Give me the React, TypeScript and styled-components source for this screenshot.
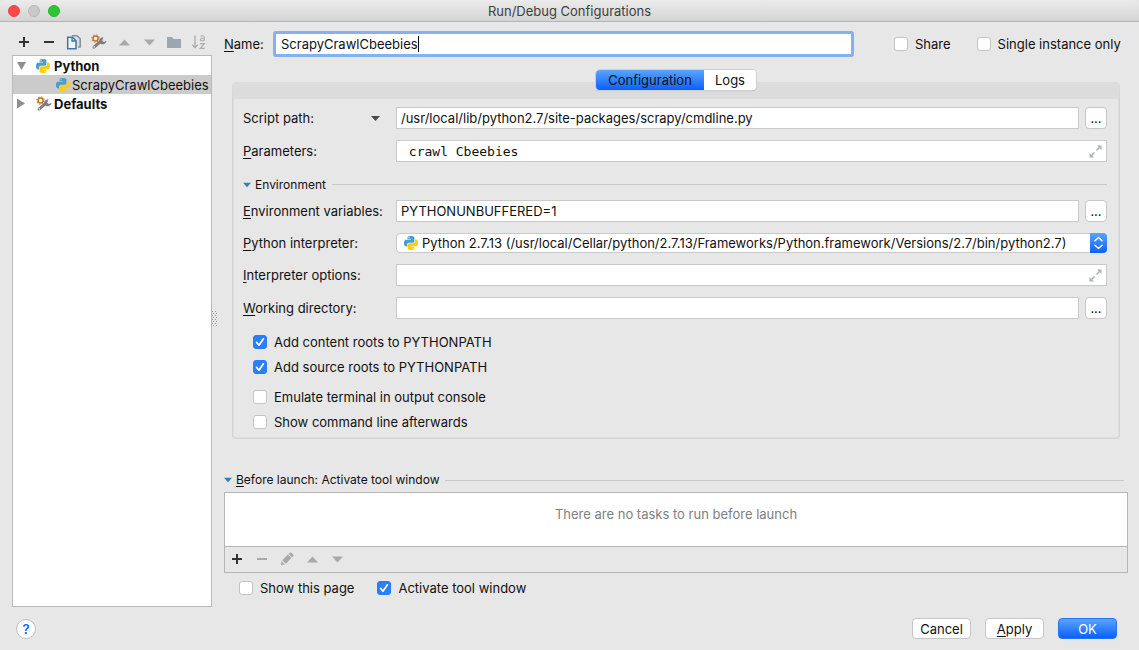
import React, { ReactNode, useState } from "react";
import styled, { createGlobalStyle, css } from "styled-components";

const GlobalStyle = createGlobalStyle`
  *, *::before, *::after { box-sizing: border-box; }
  body {
    margin: 0;
    background: #e7e7e7;
    color: #111;
    font: 13px/16px Inter, "Liberation Sans", sans-serif;
  }
  button, input, select { font: inherit; color: inherit; margin: 0; }
  ul { list-style: none; margin: 0; padding: 0; }
`;

/* ---------- window frame ---------- */

const Window = styled.div`
  display: flex;
  flex-direction: column;
  min-height: 100vh;
`;

const TitleBar = styled.header`
  display: grid;
  grid-template-columns: 76px 1fr 84px;
  align-items: center;
  height: 22px;
  padding-left: 8px;
  background: linear-gradient(#ebebeb, #d3d3d3);
  border-bottom: 1px solid #b4b4b4;
  border-top-left-radius: 5px;
  border-top-right-radius: 5px;
`;

const Lights = styled.div`
  display: flex;
  gap: 8px;
`;

const Light = styled.button<{ $fill: string; $edge: string }>`
  width: 12px;
  height: 12px;
  padding: 0;
  border: 1px solid ${(p) => p.$edge};
  border-radius: 50%;
  background: ${(p) => p.$fill};
`;

const Title = styled.h1`
  margin: 0;
  font-size: 13px;
  font-weight: 400;
  text-align: center;
  color: #404040;
`;

const Main = styled.main`
  display: flex;
  flex: 1;
`;

const Footer = styled.footer`
  display: flex;
  align-items: center;
  gap: 14px;
  padding: 11px 22px 11px 16px;
`;

/* ---------- left side ---------- */

const Sidebar = styled.aside`
  display: flex;
  flex-direction: column;
  flex: none;
  width: 212px;
  padding-left: 12px;
`;

const ToolRow = styled.div<{ $height: number }>`
  display: flex;
  align-items: flex-start;
  height: ${(p) => p.$height}px;
`;

const ToolButton = styled.button`
  display: grid;
  place-items: center;
  width: 25px;
  height: 24px;
  padding: 0 1px 0 0;
  border: 0;
  background: none;
`;

const SidebarTools = styled(ToolRow)`
  padding-top: 8px;
`;

const Tree = styled.ul`
  flex: 1;
  border: 1px solid #b9b9b9;
  background: #fff;
`;

const TreeRow = styled.li<{ $child?: boolean; $selected?: boolean }>`
  display: flex;
  align-items: center;
  height: 19px;
  padding-left: ${(p) => (p.$child ? 43 : 3)}px;
  font-weight: ${(p) => (p.$child ? 400 : 700)};
  background: ${(p) => (p.$selected ? "#cbcbcb" : "transparent")};
  white-space: nowrap;
`;

const TreeArrow = styled.span`
  width: 20px;
  height: 10px;
  display: flex;
  align-items: center;
`;

const TreeIcon = styled.span<{ $gap: number }>`
  display: flex;
  margin-right: ${(p) => p.$gap}px;
`;

const Splitter = styled.div`
  display: flex;
  align-items: center;
  flex: none;
  width: 12px;
  padding-top: 8px;
`;

/* ---------- right side ---------- */

const Details = styled.section`
  flex: 1;
  min-width: 0;
  padding: 9px 11px 11px 0;
`;

const NameRow = styled.div`
  display: flex;
  align-items: center;
`;

const NameLabel = styled.label`
  flex: none;
  width: 49px;
`;

const NameField = styled.div`
  display: flex;
  align-items: center;
  flex: 1;
  height: 26px;
  margin-right: 40px;
  padding-left: 5px;
  border: 3px solid #85b1f0;
  border-radius: 3px;
  background: #fff;
`;

const NameInput = styled.input`
  field-sizing: content;
  height: 20px;
  padding: 0;
  border: 0;
  outline: 0;
  background: none;
`;

const Caret = styled.span`
  width: 1px;
  height: 16px;
  background: #000;
`;

const NameChecks = styled.div`
  display: flex;
  gap: 26px;
  flex: none;
  width: 234px;
`;

const CheckLabel = styled.label`
  display: flex;
  align-items: center;
  gap: 7px;
  white-space: nowrap;
`;

const tick =
  "url(\"data:image/svg+xml,%3Csvg xmlns='http://www.w3.org/2000/svg' viewBox='0 0 14 14'%3E%3Cpath d='M3.6 7.4 6 10.2 10.4 3.8' fill='none' stroke='white' stroke-width='1.7' stroke-linecap='round' stroke-linejoin='round'/%3E%3C/svg%3E\")";

const CheckInput = styled.input`
  appearance: none;
  flex: none;
  width: 14px;
  height: 14px;
  border: 1px solid #c4c4c4;
  border-radius: 3px;
  background: #fff;
  &:checked {
    border-color: #2a7bf6;
    background: #2a7ffb ${tick} center / 14px 14px no-repeat;
  }
`;

const Tabs = styled.div`
  position: relative;
  display: flex;
  width: fit-content;
  margin: 13px auto -8px;
  border-radius: 4px;
  background: #fff;
  box-shadow: 0 0 0 1px #cfcfcf, 0 1px 1px #a8a8a8;
`;

const Tab = styled.button<{ $active?: boolean }>`
  height: 20px;
  padding: 0;
  width: ${(p) => (p.$active ? 108 : 52)}px;
  border: 0;
  border-radius: ${(p) => (p.$active ? "4px 0 0 4px" : "0 4px 4px 0")};
  background: ${(p) => (p.$active ? "linear-gradient(#5ba4fb, #0a60ff)" : "#fff")};
`;

const Panel = styled.div`
  margin: 0 8px;
  border: 1px solid #d3d3d3;
  border-top-width: 17px;
  border-top-color: #dcdcdc;
  border-radius: 4px;
  padding: 8px 12px 3px 10px;
  box-shadow: inset 1px 0 #dedede, inset -1px 0 #dedede, inset 0 -1px #dedede;
`;

const FormRow = styled.div`
  display: flex;
  align-items: center;
  margin-bottom: 11px;
`;

const FormLabel = styled.label`
  flex: none;
  width: 153px;
`;

const PathLabel = styled.div`
  display: flex;
  align-items: center;
  justify-content: space-between;
  flex: none;
  width: 153px;
  padding-right: 13px;
`;

const Mnemonic = styled.span`
  text-decoration: underline;
  text-underline-offset: 2px;
  text-decoration-thickness: 1px;
`;

const fieldBox = css`
  border: 1px solid #c9c9c9;
  background: #fff;
  height: 22px;
`;

const TextInput = styled.input<{ $mono?: boolean }>`
  ${fieldBox}
  flex: 1;
  min-width: 0;
  width: 100%;
  padding: 0 4px;
  outline: 0;
  ${(p) => p.$mono && css`font-family: "DejaVu Sans Mono", monospace;`}
`;

const ExpandField = styled.div`
  ${fieldBox}
  display: flex;
  align-items: center;
  flex: 1;
  padding-right: 3px;
  & > input {
    height: 20px;
    border: 0;
    background: none;
  }
`;

const BareButton = styled.button`
  display: grid;
  place-items: center;
  width: 15px;
  height: 18px;
  padding: 0;
  border: 0;
  background: none;
`;

const BrowseButton = styled.button`
  flex: none;
  width: 22px;
  height: 22px;
  margin-left: 6px;
  padding: 0;
  border: 1px solid #c6c6c6;
  border-radius: 4px;
  background: #fff;
  line-height: 20px;
`;

const SelectBox = styled.div`
  position: relative;
  flex: 1;
  display: flex;
  height: 20px;
`;

const Select = styled.select`
  appearance: none;
  flex: 1;
  min-width: 0;
  height: 20px;
  padding: 0 18px 0 25px;
  border: 1px solid #c9c9c9;
  border-radius: 4px;
  background: #fff;
  outline: 0;
`;

const SelectIcon = styled.span`
  position: absolute;
  left: 8px;
  top: 3px;
  display: flex;
  pointer-events: none;
`;

const Stepper = styled.span`
  position: absolute;
  right: 0;
  top: 0;
  display: grid;
  place-items: center;
  width: 17px;
  height: 20px;
  border-radius: 0 4px 4px 0;
  background: linear-gradient(#5ba4fb, #0a60ff);
  pointer-events: none;
`;

const SectionHead = styled.div<{ $large?: boolean }>`
  display: flex;
  align-items: center;
  font-size: 12px;
  height: ${(p) => (p.$large ? 16 : 23)}px;
  margin: ${(p) => (p.$large ? "33px 4px 4px 0" : "0 0 4px")};
  &::after {
    content: "";
    flex: 1;
    height: 1px;
    margin-left: 6px;
    background: #c8c8c8;
  }
`;

const SectionToggle = styled.button`
  display: flex;
  align-items: center;
  gap: 4px;
  padding: 0;
  border: 0;
  background: none;
`;

const CheckGroup = styled.div`
  display: grid;
  gap: 1px;
  justify-content: start;
  padding-left: 10px;
  margin-bottom: 6px;
  &:last-child { margin-bottom: 1px; }
  & > label { height: 24px; }
`;

const TaskBox = styled.div`
  border: 1px solid #b5b5b5;
`;

const TaskList = styled.div`
  height: 54px;
  padding-top: 13px;
  border-bottom: 1px solid #b5b5b5;
  background: #fff;
  text-align: center;
  color: #808080;
`;

const LaunchChecks = styled.div`
  display: flex;
  gap: 23px;
  padding: 7px 0 0 15px;
`;

/* ---------- footer buttons ---------- */

const HelpButton = styled.button`
  width: 20px;
  height: 20px;
  margin-right: auto;
  padding: 0;
  border: 1px solid #c0c0c0;
  border-radius: 50%;
  background: #fff;
  color: #0a60ff;
  font-weight: 600;
  line-height: 18px;
`;

const DialogButton = styled.button<{ $primary?: boolean }>`
  width: 59px;
  height: 21px;
  padding: 0;
  border: 1px solid ${(p) => (p.$primary ? "#2173f8" : "#c6c6c6")};
  border-radius: 4px;
  background: ${(p) => (p.$primary ? "linear-gradient(#5ba4fb, #0a60ff)" : "#fff")};
  color: ${(p) => (p.$primary ? "#fff" : "#111")};
  line-height: 18px;
`;

/* ---------- icons ---------- */

const PythonIcon = () => (
  <svg width="14" height="14" viewBox="0 0 24 24">
    <path
      fill="#4a9fd0"
      d="M14.25.18l.9.2.73.26.59.3.45.32.34.34.25.34.16.33.1.3.04.26.02.2-.01.13V8.5l-.05.63-.13.55-.21.46-.26.38-.3.31-.33.25-.35.19-.35.14-.33.1-.3.07-.26.04-.21.02H8.77l-.69.05-.59.14-.5.22-.41.27-.33.32-.27.35-.2.36-.15.37-.1.35-.07.32-.04.27-.02.21v3.06H3.17l-.21-.03-.28-.07-.32-.12-.35-.18-.36-.26-.36-.36-.35-.46-.32-.59-.28-.73-.21-.88-.14-1.05-.05-1.23.06-1.22.16-1.04.24-.87.32-.71.36-.57.4-.44.42-.33.42-.24.4-.16.36-.1.32-.05.24-.01h.16l.06.01h8.16v-.83H6.18l-.01-2.75-.02-.37.05-.34.11-.31.17-.28.25-.26.31-.23.38-.2.44-.18.51-.15.58-.12.64-.1.71-.06.77-.04.84-.02 1.27.05zm-6.3 1.98l-.23.33-.08.41.08.41.23.34.33.22.41.09.41-.09.33-.22.23-.34.08-.41-.08-.41-.23-.33-.33-.22-.41-.09-.41.09z"
    />
    <path
      fill="#fdce0b"
      d="M21.1 6.11l.28.06.32.12.35.18.36.27.36.35.35.47.32.59.28.73.21.88.14 1.04.05 1.23-.06 1.23-.16 1.04-.24.86-.32.71-.36.57-.4.45-.42.33-.42.24-.4.16-.36.09-.32.05-.24.02-.16-.01h-8.22v.82h5.84l.01 2.76.02.36-.05.34-.11.31-.17.29-.25.25-.31.24-.38.2-.44.17-.51.15-.58.13-.64.09-.71.07-.77.04-.84.01-1.27-.04-1.07-.14-.9-.2-.73-.25-.59-.3-.45-.33-.34-.34-.25-.34-.16-.33-.1-.3-.04-.25-.02-.2.01-.13v-5.34l.05-.64.13-.54.21-.46.26-.38.3-.32.33-.24.35-.2.35-.14.33-.1.3-.06.26-.04.21-.02.13-.01h5.84l.69-.05.59-.14.5-.21.41-.28.33-.32.27-.35.2-.36.15-.36.1-.35.07-.32.04-.28.02-.21V6.07h2.09l.14.01zm-6.47 14.25l-.23.33-.08.41.08.41.23.33.33.23.41.08.41-.08.33-.23.23-.33.08-.41-.08-.41-.23-.33-.33-.23-.41-.08-.41.08z"
    />
  </svg>
);

const WrenchIcon = () => (
  <svg width="16" height="16" viewBox="0 0 16 16">
    <path d="M3 13.2 9.4 7.6" stroke="#7d7d7d" strokeWidth="3" strokeLinecap="round" />
    <path
      d="M12.4 3.2c-2.5 0-4.3 1.7-4.1 4 .2 2.4 2.4 3.6 4.5 2.900 1.700-.6 2.600-1.800 2.700-3.400l-2.600 1.200-1.700-1.200z"
      fill="#7d7d7d"
    />
    <circle cx="3.3" cy="12.9" r=".8" fill="#e7e7e7" />
    <circle cx="4.6" cy="4.6" r="3.7" fill="none" stroke="#c98b4a" strokeWidth="1.2" strokeDasharray="1.5 1.406" />
    <circle cx="4.6" cy="4.6" r="2.5" fill="#f4f4f4" stroke="#c07a2c" strokeWidth="1.5" />
  </svg>
);

const PlusIcon = () => (
  <svg width="12" height="12" viewBox="0 0 12 12">
    <path d="M6 1v10M1 6h10" stroke="#333" strokeWidth="2" />
  </svg>
);

const MinusIcon = ({ color = "#333" }: { color?: string }) => (
  <svg width="12" height="12" viewBox="0 0 12 12">
    <path d="M1 6h10" stroke={color} strokeWidth="2" />
  </svg>
);

const CopyIcon = () => (
  <svg width="16" height="16" viewBox="0 0 16 16">
    <path d="M6 1h5.5L15 4.5V13H6z" fill="#d9dde0" />
    <path d="M6 1.8h5.2l3 3V13H12" fill="none" stroke="#8a8f93" strokeWidth="1.5" />
    <path d="M1.7 3.2h4.6l3.7 3.6v8H1.7z" fill="#eef4f8" stroke="#3c78a3" strokeWidth="1.5" />
    <path d="M6 3.2V7h4" fill="none" stroke="#3c78a3" strokeWidth="1.3" />
  </svg>
);

const FolderIcon = () => (
  <svg width="16" height="14" viewBox="0 0 16 14">
    <path d="M1 2h5l1.5 2H15v9H1z" fill="#9aa7b0" />
  </svg>
);

const SortIcon = () => (
  <svg width="16" height="16" viewBox="0 0 16 16" fill="none" stroke="#aeaeae" strokeWidth="1.4">
    <path d="M4 1.5v12M1.2 10.8 4 13.8l2.8-3" />
    <path d="M9.5 2.3c1.5-1 3.8-.7 3.8 1v3.4M13.3 4.3H11c-2.2.1-2 2.4-.3 2.4 1.5 0 2.6-.8 2.6-1.8" strokeWidth="1.1" />
    <path d="M9 9.7h4.3L9.3 14.3h4.4" strokeWidth="1.2" />
  </svg>
);

const PencilIcon = () => (
  <svg width="14" height="14" viewBox="0 0 14 14" fill="#a9a9a9">
    <path d="m1.5 9 3.4 3.4L1 13z" />
    <path d="m2.3 8.2 5.6-5.6 3.5 3.5-5.6 5.6z" />
    <path d="m8.6 1.9 1-1c.6-.6 1.4-.6 2 0l1.5 1.5c.6.6.6 1.4 0 2l-1 1z" />
  </svg>
);

type Dir = "up" | "down" | "right";
const triangles: Record<Dir, string> = {
  up: "M0 8 5.5 2 11 8z",
  down: "M0 2h11L5.5 8z",
  right: "M1 0v10l8-5z",
};

const Triangle = ({ dir, color = "#a9a9a9", size = 11 }: { dir: Dir; color?: string; size?: number }) => (
  <svg width={size} height={size} viewBox="0 0 11 10">
    <path d={triangles[dir]} fill={color} />
  </svg>
);

/* Taller disclosure arrow of the open tree node */
const OpenArrow = () => (
  <svg width="10" height="10" viewBox="0 0 10 10">
    <path d="M1 1h9L5.5 9z" fill="#8e8e8e" />
  </svg>
);

const ExpandIcon = () => (
  <svg width="13" height="13" viewBox="0 0 13 13">
    <path d="M8 .5h4.500V5zM.5 8v4.500H5z" fill="#a9b3ba" />
    <path d="M10.5 2.5 7.5 5.5M2.5 10.5l3-3" stroke="#a9b3ba" strokeWidth="1.5" />
  </svg>
);

const StepperIcon = () => (
  <svg width="9" height="14" viewBox="0 0 9 14" fill="none" stroke="#fff" strokeWidth="1.5" strokeLinecap="round" strokeLinejoin="round">
    <path d="M1 4.7 4.5 1.5 8 4.7M1 9.3l3.5 3.2L8 9.3" />
  </svg>
);

const GripIcon = () => (
  <svg width="5" height="16" viewBox="0 0 5 16" fill="#9c9c9c">
    {[0, 2, 4, 6, 8, 10, 12, 14].map((y) => (
      <g key={y}>
        <rect x={y % 4 ? 1 : 0} y={y} width="1" height="1" />
        <rect x={y % 4 ? 4 : 3} y={y} width="1" height="1" />
      </g>
    ))}
  </svg>
);

/* ---------- shared parts ---------- */

const Check = ({ children, on = false }: { children: ReactNode; on?: boolean }) => {
  const [checked, setChecked] = useState(on);
  return (
    <CheckLabel>
      <CheckInput type="checkbox" checked={checked} onChange={(e) => setChecked(e.target.checked)} />
      {children}
    </CheckLabel>
  );
};

const Keyed = ({ text }: { text: string }) => (
  <>
    <Mnemonic>{text[0]}</Mnemonic>
    {text.slice(1)}
  </>
);

const Browse = ({ label }: { label: string }) => (
  <BrowseButton type="button" aria-label={label}>...</BrowseButton>
);

const Tool = ({ label, children }: { label: string; children: ReactNode }) => (
  <ToolButton type="button" aria-label={label}>{children}</ToolButton>
);

export default function App() {
  return (
    <Window>
      <GlobalStyle />
      <TitleBar>
        <Lights>
          <Light aria-label="Close" $fill="#fc4948" $edge="#ee4443" />
          <Light aria-label="Minimize" $fill="#c9c9c9" $edge="#b8b8b8" />
          <Light aria-label="Zoom" $fill="#29c732" $edge="#22b62b" />
        </Lights>
        <Title>Run/Debug Configurations</Title>
      </TitleBar>

      <Main>
        <Sidebar>
          <SidebarTools $height={33}>
            <Tool label="Add"><PlusIcon /></Tool>
            <Tool label="Remove"><MinusIcon /></Tool>
            <Tool label="Copy"><CopyIcon /></Tool>
            <Tool label="Edit defaults"><WrenchIcon /></Tool>
            <Tool label="Move up"><Triangle dir="up" /></Tool>
            <Tool label="Move down"><Triangle dir="down" /></Tool>
            <Tool label="New folder"><FolderIcon /></Tool>
            <Tool label="Sort"><SortIcon /></Tool>
          </SidebarTools>
          <Tree>
            <TreeRow>
              <TreeArrow><OpenArrow /></TreeArrow>
              <TreeIcon $gap={4}><PythonIcon /></TreeIcon>
              Python
            </TreeRow>
            <TreeRow $child $selected>
              <TreeIcon $gap={2}><PythonIcon /></TreeIcon>
              ScrapyCrawlCbeebies
            </TreeRow>
            <TreeRow>
              <TreeArrow><Triangle dir="right" color="#8e8e8e" /></TreeArrow>
              <TreeIcon $gap={2}><WrenchIcon /></TreeIcon>
              Defaults
            </TreeRow>
          </Tree>
        </Sidebar>
        <Splitter><GripIcon /></Splitter>

        <Details>
          <NameRow>
            <NameLabel htmlFor="name"><Keyed text="Name:" /></NameLabel>
            <NameField>
              <NameInput id="name" defaultValue="ScrapyCrawlCbeebies" />
              <Caret />
            </NameField>
            <NameChecks>
              <Check>Share</Check>
              <Check>Single instance only</Check>
            </NameChecks>
          </NameRow>

          <Tabs role="tablist">
            <Tab role="tab" aria-selected $active>Configuration</Tab>
            <Tab role="tab" aria-selected={false}>Logs</Tab>
          </Tabs>
          <Panel>
            <FormRow>
              <PathLabel>
                <label htmlFor="script">Script path:</label>
                <BareButton type="button" aria-label="Choose target kind">
                  <Triangle dir="down" color="#4a4a4a" size={9} />
                </BareButton>
              </PathLabel>
              <TextInput id="script" defaultValue="/usr/local/lib/python2.7/site-packages/scrapy/cmdline.py" />
              <Browse label="Browse script" />
            </FormRow>
            <FormRow>
              <FormLabel htmlFor="params"><Keyed text="Parameters:" /></FormLabel>
              <ExpandField>
                <TextInput id="params" $mono defaultValue=" crawl Cbeebies" />
                <BareButton type="button" aria-label="Expand parameters"><ExpandIcon /></BareButton>
              </ExpandField>
            </FormRow>
            <SectionHead>
              <SectionToggle type="button">
                <Triangle dir="down" color="#2f82b8" size={8} />
                <span>Environment</span>
              </SectionToggle>
            </SectionHead>
            <FormRow>
              <FormLabel htmlFor="env"><Keyed text="Environment variables:" /></FormLabel>
              <TextInput id="env" defaultValue="PYTHONUNBUFFERED=1" />
              <Browse label="Edit variables" />
            </FormRow>
            <FormRow>
              <FormLabel htmlFor="interp"><Keyed text="Python interpreter:" /></FormLabel>
              <SelectBox>
                <Select id="interp">
                  <option>Python 2.7.13 (/usr/local/Cellar/python/2.7.13/Frameworks/Python.framework/Versions/2.7/bin/python2.7)</option>
                </Select>
                <SelectIcon><PythonIcon /></SelectIcon>
                <Stepper><StepperIcon /></Stepper>
              </SelectBox>
            </FormRow>
            <FormRow>
              <FormLabel htmlFor="options"><Keyed text="Interpreter options:" /></FormLabel>
              <ExpandField>
                <TextInput id="options" />
                <BareButton type="button" aria-label="Expand options"><ExpandIcon /></BareButton>
              </ExpandField>
            </FormRow>
            <FormRow>
              <FormLabel htmlFor="dir"><Keyed text="Working directory:" /></FormLabel>
              <TextInput id="dir" />
              <Browse label="Browse directory" />
            </FormRow>
            <CheckGroup>
              <Check on>Add content roots to PYTHONPATH</Check>
              <Check on>Add source roots to PYTHONPATH</Check>
            </CheckGroup>
            <CheckGroup>
              <Check>Emulate terminal in output console</Check>
              <Check>Show command line afterwards</Check>
            </CheckGroup>
          </Panel>

          <SectionHead $large>
            <SectionToggle type="button">
              <Triangle dir="down" color="#2f82b8" size={8} />
              <span><Keyed text="Before launch: Activate tool window" /></span>
            </SectionToggle>
          </SectionHead>
          <TaskBox>
            <TaskList>There are no tasks to run before launch</TaskList>
            <ToolRow $height={25}>
              <Tool label="Add task"><PlusIcon /></Tool>
              <Tool label="Remove task"><MinusIcon color="#a9a9a9" /></Tool>
              <Tool label="Edit task"><PencilIcon /></Tool>
              <Tool label="Move task up"><Triangle dir="up" /></Tool>
              <Tool label="Move task down"><Triangle dir="down" /></Tool>
            </ToolRow>
          </TaskBox>
          <LaunchChecks>
            <Check>Show this page</Check>
            <Check on>Activate tool window</Check>
          </LaunchChecks>
        </Details>
      </Main>

      <Footer>
        <HelpButton type="button" aria-label="Help">?</HelpButton>
        <DialogButton type="button">Cancel</DialogButton>
        <DialogButton type="button"><Keyed text="Apply" /></DialogButton>
        <DialogButton type="button" $primary>OK</DialogButton>
      </Footer>
    </Window>
  );
}
